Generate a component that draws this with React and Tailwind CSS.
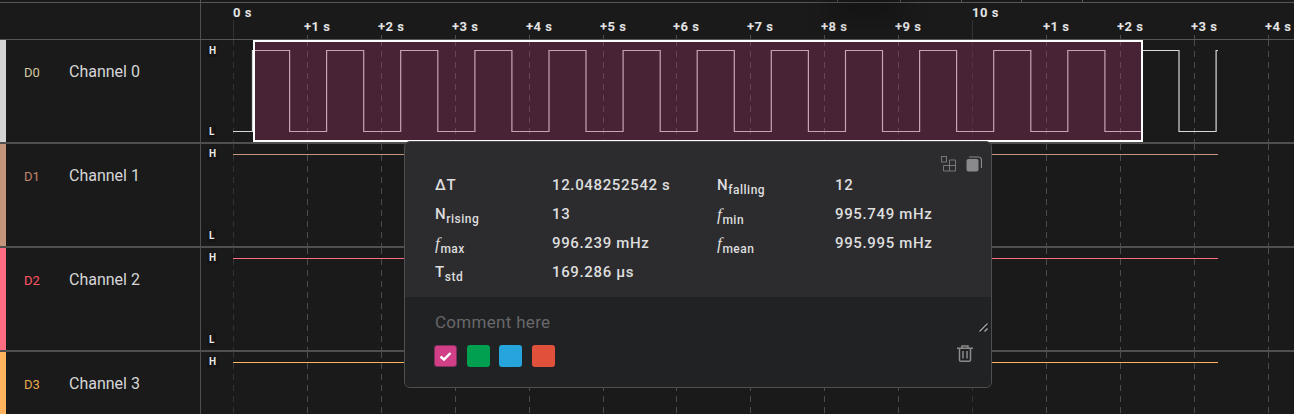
import React from "react";

const TICK_X0 = 233;
const TICK_STEP = 73.9;
const HALF_PERIOD = 37.06;
const ROW_W = 1093;
const ORIGIN = 201;

const ticks = [
  { label: "0 s", major: true },
  { label: "+1 s" },
  { label: "+2 s" },
  { label: "+3 s" },
  { label: "+4 s" },
  { label: "+5 s" },
  { label: "+6 s" },
  { label: "+7 s" },
  { label: "+8 s" },
  { label: "+9 s" },
  { label: "10 s", major: true },
  { label: "+1 s" },
  { label: "+2 s" },
  { label: "+3 s" },
  { label: "+4 s" },
];

const topMarks = [200, 837, 900, 961, 1021, 1082];

const channels = [
  { id: "D0", name: "Channel 0", color: "#d4d4d4", idClass: "text-[#d4c9a0]", barClass: "bg-[#d4d4d4]", highClass: "top-[5px]", square: true, hasLow: true },
  { id: "D1", name: "Channel 1", color: "#c4957a", idClass: "text-[#c4856a]", barClass: "bg-[#c4957a]", highClass: "top-[4px]", hasLow: true },
  { id: "D2", name: "Channel 2", color: "#ff6b81", idClass: "text-[#ff5565]", barClass: "bg-[#ff6b81]", highClass: "top-[4px]", hasLow: true },
  { id: "D3", name: "Channel 3", color: "#ffb35c", idClass: "text-[#e8a850]", barClass: "bg-[#ffb35c]", highClass: "top-[4px]" },
];

const squarePath = () => {
  let d = "M32 91.5 H51.5 V10.5";
  let x = 51.5;
  let high = true;
  while (x + HALF_PERIOD < 1017) {
    x += HALF_PERIOD;
    d += ` H${x.toFixed(1)} V${high ? 91.5 : 10.5}`;
    high = !high;
  }
  return d + " H1017";
};

const Waveform = ({ channel }) => (
  <svg width={ROW_W} height="102" className="absolute inset-0 block">
    {ticks.map((t, i) => {
      const x = Math.round(TICK_X0 - ORIGIN + i * TICK_STEP) + 0.5;
      return (
        <line
          key={i}
          x1={x}
          x2={x}
          y1="0"
          y2="102"
          stroke={t.major ? "#333333" : "#4b4b4b"}
          strokeDasharray="6 5"
        />
      );
    })}
    {channel.square ? (
      <path d={squarePath()} fill="none" stroke="#d8d8d8" strokeWidth="1.2" />
    ) : (
      <line x1="32" x2="1017" y1="10.5" y2="10.5" stroke={channel.color} strokeWidth="1.2" />
    )}
  </svg>
);

const LevelLabel = ({ className, children }) => (
  <span className={`absolute left-[6px] bg-[#151516] px-[2px] text-[10px] leading-3 font-bold text-[#e8e8e8] ${className}`}>
    {children}
  </span>
);

const Row = ({ channel }) => (
  <div className="flex h-[104px] shrink-0 border-b-2 border-[#4f4f4f]">
    <div className={`w-[6px] shrink-0 ${channel.barClass}`} />
    <div className="flex w-[195px] shrink-0 border-r border-[#4f4f4f] pt-[22px]">
      <span className={`ml-[18px] w-[45px] pt-px text-[13px] leading-5 ${channel.idClass}`}>{channel.id}</span>
      <span className="text-[16px] leading-5 text-[#d6d6d6]">{channel.name}</span>
    </div>
    <div className="relative flex-1 overflow-hidden">
      <Waveform channel={channel} />
      <LevelLabel className={channel.highClass}>H</LevelLabel>
      {channel.hasLow && <LevelLabel className="top-[86px]">L</LevelLabel>}
    </div>
  </div>
);

const Stat = ({ label, sub, italic, value, wide }) => (
  <div className="flex h-[29px] items-center text-[15px] font-medium tracking-[0.65px] text-[#dedede]">
    <span className={`flex items-baseline ${wide ? "w-[118px]" : "w-[117px]"}`}>
      <span className={italic ? "font-['Liberation_Serif',serif] text-[17px] italic" : ""}>{label}</span>
      {sub && <span className="relative top-[4px] text-[12px] font-medium tracking-[0.5px]">{sub}</span>}
    </span>
    <span>{value}</span>
  </div>
);

const Popover = () => (
  <div className="absolute left-[404px] top-[141px] z-20 flex h-[247px] w-[588px] flex-col overflow-hidden rounded-md border border-[#4f4f50] bg-[#2c2c2e]">
    <div className="relative h-[155px] shrink-0 pl-[30px] pt-[29px]">
      <div className="absolute right-[9px] top-[14px] flex items-center gap-[9px]">
        <svg width="16" height="16" viewBox="0 0 16 16" fill="none" stroke="#77777a" strokeWidth="1">
          <rect x="0.5" y="0.5" width="5" height="5.5" />
          <path d="M8.5 4 H14.5 V15 H2.5 V9.5 H14.5 M8.5 4 V15" />
        </svg>
        <svg width="16" height="16" viewBox="0 0 16 16" fill="none">
          <rect x="0.5" y="3" width="12" height="12.5" rx="2" fill="#8a8a8c" />
          <path d="M3 1 H12.5 Q15.5 1 15.5 4 V12" stroke="#8a8a8c" strokeWidth="1.2" />
        </svg>
      </div>
      <div className="grid w-[530px] grid-cols-[282px_1fr]">
        <Stat label="ΔT" value="12.048252542 s" />
        <Stat label="N" sub="falling" value="12" wide />
        <Stat label="N" sub="rising" value="13" />
        <Stat label="f" sub="min" italic value="995.749 mHz" wide />
        <Stat label="f" sub="max" italic value="996.239 mHz" />
        <Stat label="f" sub="mean" italic value="995.995 mHz" wide />
        <Stat label="T" sub="std" value="169.286 µs" />
      </div>
    </div>
    <div className="relative flex-1 bg-[#212224] pl-[30px] pt-[13px]">
      <div className="text-[17px] leading-6 tracking-[0.3px] text-[#68686a]">Comment here</div>
      <svg width="11" height="11" viewBox="0 0 11 11" className="absolute right-[2px] top-[25px]">
        <path d="M1.5 9.5 L9.5 1.5" stroke="#0c0c0c" strokeWidth="3" />
        <path d="M1.5 9.5 L9.5 1.5 M6.5 9.5 L9.5 6.5" stroke="#a8a8a8" strokeWidth="1.4" />
      </svg>
      <div className="-ml-px mt-[11px] flex gap-[9.7px]">
        <span className="flex h-[22px] w-[23px] items-center justify-center rounded-[3px] border border-[#7f2f60] bg-[#d13f87]">
          <svg width="13" height="11" viewBox="0 0 13 11" fill="none">
            <path d="M1.5 5.5 L5 8.5 L11.5 2" stroke="#ffffff" strokeWidth="2.4" />
          </svg>
        </span>
        <span className="h-[22px] w-[23px] rounded-[3px] bg-[#00a050]" />
        <span className="h-[22px] w-[23px] rounded-[3px] bg-[#25a5dc]" />
        <span className="h-[22px] w-[23px] rounded-[3px] bg-[#e1503a]" />
      </div>
      <svg width="16" height="17" viewBox="0 0 16 17" fill="none" stroke="#8c8c8c" strokeWidth="1.5" className="absolute right-[18px] top-[48px]">
        <path d="M0 3.25 H16 M5 3 V1 H11 V3" />
        <path d="M2.5 3.5 V15 Q2.5 16.25 4 16.25 H12 Q13.5 16.25 13.5 15 V3.5" />
        <path d="M6 6 V13.5 M10 6 V13.5" />
      </svg>
    </div>
  </div>
);

export default function App() {
  return (
    <div className="relative h-[414px] w-[1294px] overflow-hidden bg-[#1a1a1b] font-['Roboto',sans-serif]">
      <div className="relative h-[2px]">
        {topMarks.map((x) => (
          <span key={x} className="absolute top-0 h-[2px] w-px bg-[#55555a]" style={{ left: x }} />
        ))}
      </div>
      <div className="flex h-[38px] border-y border-[#55555a]">
        <div className="w-[201px] shrink-0 border-r border-[#4f4f4f]" />
        <div className="relative flex-1">
          {ticks.map((t, i) => {
            const x = Math.round(TICK_X0 - ORIGIN + i * TICK_STEP);
            return (
              <React.Fragment key={i}>
                <span
                  className={`absolute w-px ${t.major ? "top-[17px] h-[19px] bg-[#333333]" : "top-[32px] h-[4px] bg-[#4b4b4b]"}`}
                  style={{ left: x }}
                />
                <span
                  className="absolute text-[13px] leading-4 font-bold tracking-[0.5px] whitespace-nowrap text-[#e4e4e4]"
                  style={{ left: x + (t.major ? 0 : -3), top: t.major ? 2 : 16 }}
                >
                  {t.label}
                </span>
              </React.Fragment>
            );
          })}
        </div>
      </div>
      <div className="flex flex-col">
        {channels.map((c) => (
          <Row key={c.id} channel={c} />
        ))}
      </div>
      <div className="absolute left-[830px] top-0 h-[14px] w-[75px] bg-black/40 blur-md" />
      <div className="absolute left-[253px] top-[40px] z-10 h-[102px] w-[890px] border-2 border-white bg-[#aa366c]/[0.32]" />
      <Popover />
    </div>
  );
}
